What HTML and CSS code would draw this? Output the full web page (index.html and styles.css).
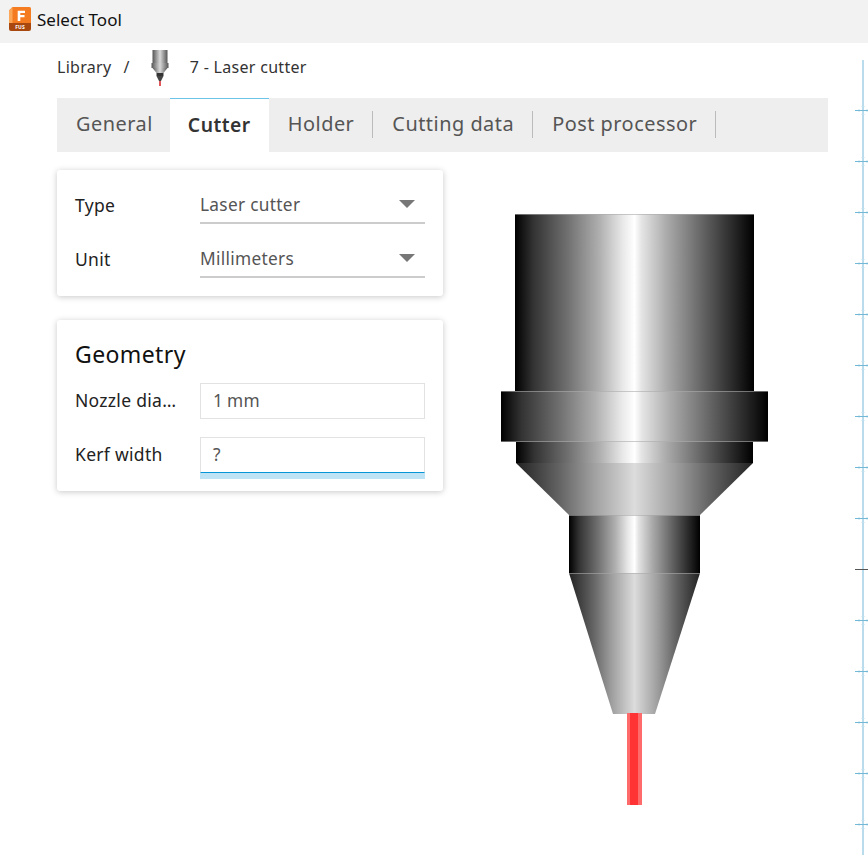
FILE: index.html
```html
<!DOCTYPE html>
<html lang="en">
<head>
  <meta charset="UTF-8" />
  <meta name="viewport" content="width=device-width, initial-scale=1.0"/>
  <title>Select Tool</title>
  <link rel="stylesheet" href="styles.css">
</head>
<body>
  <header class="titlebar">
    <svg class="app-logo" viewBox="0 0 22 24" width="22" height="24">
      <path d="M3.500 0H20.500Q22 0 22 1.500V16H0V3.500Z" fill="#f47b20"/>
      <path d="M3.500 0V16H0V3.500Z" fill="#fba757"/>
      <path d="M0 16H22V22Q22 24 20 24H2Q0 24 0 22Z" fill="#a8480f"/>
      <path d="M8.700 3.700H16V6H11.300V8H15.500V10.200H11.300V14H8.700Z" fill="#fff"/>
      <text x="11" y="21.800" class="app-logo-text">FUS</text>
    </svg>
    <span class="titlebar-text">Select Tool</span>
  </header>

  <div class="workspace">
    <main class="main">
      <nav class="breadcrumb">
        <span>Library</span>
        <span class="breadcrumb-sep">/</span>
        <svg class="breadcrumb-tool" viewBox="0 0 18 36" width="18" height="36">
          <defs>
            <linearGradient id="thumbMetal" x1="0" x2="1" y1="0" y2="0">
              <stop offset="0" stop-color="#555"/>
              <stop offset="0.5" stop-color="#d8d8d8"/>
              <stop offset="1" stop-color="#555"/>
            </linearGradient>
          </defs>
          <rect x="1.500" y="0" width="15" height="13" fill="url(#thumbMetal)"/>
          <rect x="0.500" y="13" width="17" height="5" fill="url(#thumbMetal)"/>
          <path d="M1.500 18H16.500L12.500 23H5.500Z" fill="url(#thumbMetal)"/>
          <rect x="5.500" y="23" width="7" height="3" fill="#333"/>
          <path d="M5.500 26H12.500L10 31H8Z" fill="#444"/>
          <rect x="8" y="31" width="2" height="5" fill="#e2575c"/>
        </svg>
        <span class="breadcrumb-name">7 - Laser cutter</span>
      </nav>

      <div class="tabs">
        <div class="tab">General</div>
        <div class="tab tab-active">Cutter</div>
        <div class="tab tab-split">Holder</div>
        <div class="tab tab-split">Cutting data</div>
        <div class="tab tab-split">Post processor</div>
      </div>

      <div class="content">
        <div class="panel-column">
          <section class="card">
            <div class="row">
              <label class="row-label">Type</label>
              <div class="select"><span>Laser cutter</span><i class="caret"></i></div>
            </div>
            <div class="row">
              <label class="row-label">Unit</label>
              <div class="select"><span>Millimeters</span><i class="caret"></i></div>
            </div>
          </section>

          <section class="card card-geometry">
            <h2 class="card-title">Geometry</h2>
            <div class="row">
              <label class="row-label">Nozzle dia…</label>
              <div class="field">1 mm</div>
            </div>
            <div class="row">
              <label class="row-label">Kerf width</label>
              <div class="field field-focus">?</div>
            </div>
          </section>
        </div>

        <svg class="preview" viewBox="0 0 385 703" width="385" height="703">
          <defs>
            <linearGradient id="metal" x1="0" x2="1" y1="0" y2="0">
              <stop offset="0" stop-color="#000"/>
              <stop offset="0.077" stop-color="#333"/>
              <stop offset="0.22" stop-color="#707070"/>
              <stop offset="0.355" stop-color="#b0b0b0"/>
              <stop offset="0.45" stop-color="#e8e8e8"/>
              <stop offset="0.5" stop-color="#fff"/>
              <stop offset="0.53" stop-color="#e4e4e4"/>
              <stop offset="0.636" stop-color="#aaa"/>
              <stop offset="0.78" stop-color="#666"/>
              <stop offset="0.91" stop-color="#2a2a2a"/>
              <stop offset="1" stop-color="#000"/>
            </linearGradient>
            <linearGradient id="metalCone" x1="0" x2="1" y1="0" y2="0">
              <stop offset="0" stop-color="#222"/>
              <stop offset="0.19" stop-color="#666"/>
              <stop offset="0.33" stop-color="#a0a0a0"/>
              <stop offset="0.5" stop-color="#dcdcdc"/>
              <stop offset="0.67" stop-color="#a0a0a0"/>
              <stop offset="0.81" stop-color="#666"/>
              <stop offset="1" stop-color="#222"/>
            </linearGradient>
          </defs>
          <g transform="translate(-443 -170)">
            <rect x="515" y="214" width="239" height="177" fill="url(#metal)"/>
            <rect x="501" y="391" width="267" height="51" fill="url(#metal)"/>
            <rect x="516" y="442" width="237" height="21" fill="url(#metal)"/>
            <path d="M516 463H753L700 515H569Z" fill="url(#metalCone)"/>
            <rect x="569" y="515" width="131" height="58" fill="url(#metal)"/>
            <path d="M569 573H700L655 714H613Z" fill="url(#metalCone)"/>
            <path class="edge" d="M515 214.500H754M501 391.500H768M501 441.500H768M569 515.500H700M569 573.500H700"/>
            <rect x="627" y="713" width="15" height="92" fill="#ff6b6b"/>
            <rect x="630" y="713" width="8" height="92" fill="#ff3333"/>
          </g>
        </svg>
      </div>
    </main>

    <svg class="ruler" viewBox="0 0 13 795" width="13" height="795">
      <defs>
        <g id="tick">
          <path class="ruler-faint" d="M6.500 -3.500H9.500M6.500 4.500H9.500M4 -1V2M12 -1V2"/>
          <path class="ruler-line" d="M0 0.500H13"/>
        </g>
      </defs>
      <path class="ruler-line" d="M8 0V795"/>
      <use href="#tick" y="50"/>
      <use href="#tick" y="101"/>
      <use href="#tick" y="152"/>
      <use href="#tick" y="203"/>
      <use href="#tick" y="254"/>
      <use href="#tick" y="305"/>
      <use href="#tick" y="356"/>
      <use href="#tick" y="407"/>
      <use href="#tick" y="458"/>
      <use href="#tick" y="560"/>
      <use href="#tick" y="611"/>
      <use href="#tick" y="662"/>
      <use href="#tick" y="713"/>
      <use href="#tick" y="764"/>
      <path class="ruler-dark" d="M0 509.500H13"/>
    </svg>
  </div>
</body>
</html>
```

FILE: styles.css
```css
html, body {
  margin: 0;
  height: 855px;
  overflow: hidden;
  background-color: white;
  font-family: "Noto Sans", Arial, sans-serif;
}
.titlebar {
  display: flex;
  align-items: center;
  gap: 6px;
  height: 43px;
  box-sizing: border-box;
  padding: 0 0 4px 9px;
  background-color: #f2f2f2;
}
.app-logo {
  margin-top: -1px;
}
.app-logo-text {
  font-family: "Noto Sans", Arial, sans-serif;
  font-size: 5px;
  font-weight: 700;
  text-anchor: middle;
  fill: #fff;
}
.titlebar-text {
  font-size: 17px;
  color: #111;
}
.workspace {
  display: flex;
}
.main {
  width: 771px;
  padding-left: 57px;
  margin-right: 27px;
}
.breadcrumb {
  display: flex;
  align-items: center;
  height: 48px;
  box-sizing: border-box;
  margin-bottom: 7px;
  font-size: 16px;
  letter-spacing: 0.3px;
  color: #333;
}
.breadcrumb-sep {
  margin-left: 12px;
  margin-right: 21px;
}
.breadcrumb-tool {
  margin-top: 2px;
}
.breadcrumb-name {
  margin-left: 21px;
}
.tabs {
  display: flex;
  height: 54px;
  background-color: #eee;
  font-size: 19.900px;
  letter-spacing: 0.5px;
  color: #555;
}
.tab {
  display: flex;
  align-items: center;
  padding: 0 19px 3px;
  position: relative;
}
.tab:first-child {
  padding-right: 17px;
}
.tab-active {
  padding: 0 18px 3px;
  font-weight: 600;
  font-size: 19.300px;
  color: #333;
  background-color: white;
  border-top: 1px solid #6cc5e8;
}
.tab-split::after {
  content: "";
  position: absolute;
  right: 0;
  top: 13px;
  height: 27px;
  width: 1px;
  background-color: #bbb;
}
.content {
  display: flex;
  padding-top: 18px;
}
.panel-column {
  width: 386px;
  display: flex;
  flex-direction: column;
  gap: 24px;
}
.card {
  padding: 18px;
  background-color: white;
  border-radius: 3px;
  box-shadow: 0 1px 6px rgba(0, 0, 0, 0.22);
  display: flex;
  flex-direction: column;
  gap: 18px;
}
.card-geometry {
  padding-top: 17px;
}
.card-title {
  margin: 0;
  height: 28px;
  font-size: 23px;
  line-height: 34px;
  font-weight: 400;
  letter-spacing: 0.4px;
  color: #111;
}
.row {
  display: flex;
  align-items: center;
  height: 36px;
}
.row-label {
  width: 105px;
  margin: -2px 20px 0 0;
  font-size: 17.500px;
  letter-spacing: 0.3px;
  color: #222;
  white-space: nowrap;
}
.select {
  flex: 1;
  height: 36px;
  display: flex;
  align-items: center;
  justify-content: space-between;
  box-sizing: border-box;
  padding-bottom: 2px;
  border-bottom: 2px solid #ccc;
  font-size: 17.300px;
  letter-spacing: 0.3px;
  color: #555;
}
.caret {
  width: 0;
  height: 0;
  margin-right: 10px;
  border-left: 8px solid transparent;
  border-right: 8px solid transparent;
  border-top: 8px solid #777;
}
.field {
  flex: 1;
  height: 36px;
  box-sizing: border-box;
  padding-left: 12px;
  line-height: 34px;
  border: 1px solid #e2e2e2;
  font-size: 17.300px;
  letter-spacing: 0.3px;
  word-spacing: -1px;
  color: #555;
}
.field-focus {
  border-bottom: 1px solid #0696d7;
  box-shadow: 0 6px 0 #bde3f4;
}
.preview {
  display: block;
}
.edge {
  fill: none;
  stroke: rgba(170, 170, 170, 0.6);
  stroke-width: 1;
}
.ruler {
  margin-top: 17px;
  flex: none;
}
.ruler-line {
  fill: none;
  stroke: #74b8d8;
  stroke-width: 1;
}
.ruler-faint {
  fill: none;
  stroke: #bfe0ee;
  stroke-width: 1;
}
.ruler-dark {
  fill: none;
  stroke: #555;
  stroke-width: 1;
}
```
